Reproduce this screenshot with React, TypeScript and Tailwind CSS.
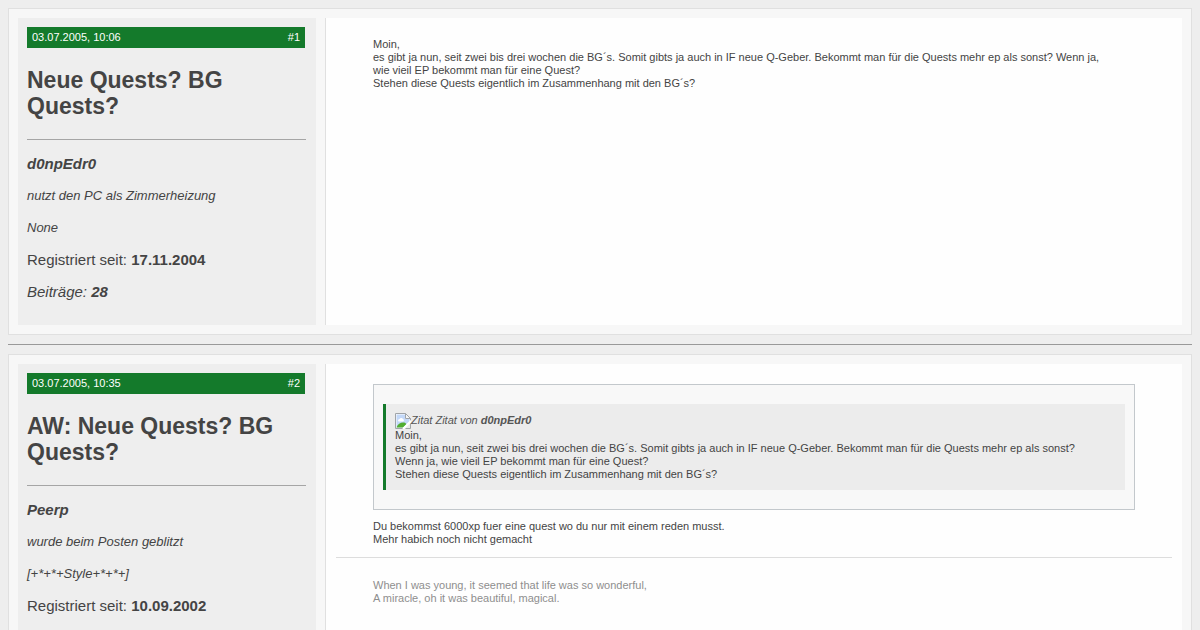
import React from "react";

interface Post {
  id: number;
  date: string;
  title: string;
  author: string;
  userTitle: string;
  nick: string;
  registered: string;
  postCount?: string;
  quote?: { author: string; lines: string[] };
  lines: string[];
  signature?: string[];
}

const QUESTION = [
  "Moin,",
  "es gibt ja nun, seit zwei bis drei wochen die BG´s. Somit gibts ja auch in IF neue Q-Geber. Bekommt man für die Quests mehr ep als sonst? Wenn ja, wie vieil EP bekommt man für eine Quest?",
  "Stehen diese Quests eigentlich im Zusammenhang mit den BG´s?",
];

const POSTS: Post[] = [
  {
    id: 1,
    date: "03.07.2005, 10:06",
    title: "Neue Quests? BG Quests?",
    author: "d0npEdr0",
    userTitle: "nutzt den PC als Zimmerheizung",
    nick: "None",
    registered: "17.11.2004",
    postCount: "28",
    lines: QUESTION,
  },
  {
    id: 2,
    date: "03.07.2005, 10:35",
    title: "AW: Neue Quests? BG Quests?",
    author: "Peerp",
    userTitle: "wurde beim Posten geblitzt",
    nick: "[+*+*+Style+*+*+]",
    registered: "10.09.2002",
    quote: { author: "d0npEdr0", lines: QUESTION },
    lines: ["Du bekommst 6000xp fuer eine quest wo du nur mit einem reden musst.", "Mehr habich noch nicht gemacht"],
    signature: ["When I was young, it seemed that life was so wonderful,", "A miracle, oh it was beautiful, magical."],
  },
];

const MissingImage: React.FC = () => (
  <svg className="h-4 w-4 shrink-0" viewBox="0 0 16 16" aria-hidden="true">
    <path d="M.5.5h10l5 5V8L8 15.500H.5z" fill="#fff" />
    <path d="M1.500 1.500H10V6h4.500v2.500L8 14.500H1.500z" fill="#c3d8f8" />
    <path d="M3 7.500a1.500 1.500 0 0 1 1.500-1.500 2 2 0 0 1 3.500 0A1.300 1.300 0 0 1 8 8.500H4a1 1 0 0 1-1-1z" fill="#fff" />
    <path d="M1.500 14.500c1-3.500 4-5 6.500-5 1.500 0 2.700.4 3.500 1.700L8 14.500z" fill="#52ae32" />
    <path d="M8 15.500H.5V.5h10l5 5v2" fill="none" stroke="#a0a4a8" />
    <path d="M10.500.5v5h5z" fill="#f6f6f6" stroke="#a0a4a8" />
    <path d="M16 8 8 16" stroke="#fff" strokeWidth="2" />
    <path d="M15.500 10.500v5H10.500" fill="none" stroke="#a0a4a8" />
  </svg>
);

const Lines: React.FC<{ lines: string[] }> = ({ lines }) => (
  <div className="pr-5">
    {lines.map((line) => (
      <p key={line}>{line}</p>
    ))}
  </div>
);

const Quote: React.FC<{ author: string; lines: string[] }> = ({ author, lines }) => (
  <div className="mb-[10px] border border-[#c3c8cc] bg-[#f8f8f8] px-[9px] py-[19px]">
    <blockquote className="border-l-[3px] border-[#147a2b] bg-[#ececec] px-[9px] pt-2 pb-[9px]">
      <div className="flex h-[17px] items-center italic text-[#555]">
        <MissingImage />
        <span>
          Zitat Zitat von <strong>{author}</strong>
        </span>
      </div>
      <Lines lines={lines} />
    </blockquote>
  </div>
);

const PostItem: React.FC<{ post: Post }> = ({ post }) => (
  <article id={`post${post.id}`} className="flex border border-[#e0e0e0] bg-[#f7f7f7] p-[9px]">
    <aside className="w-[298px] shrink-0 bg-[#eee] pt-[9px] pr-[10px] pb-[23px] pl-[9px]">
      <div className="mr-px flex h-[21px] items-center justify-between bg-[#147a2b] px-[5px] text-[11px] text-white">
        <span>{post.date}</span>
        <a href={`#post${post.id}`}>#{post.id}</a>
      </div>
      <h2 className="mt-[19px] text-[23px] leading-[26px] font-bold">{post.title}</h2>
      <hr className="mt-5 mb-[14px] border-[#a5a5a5]" />
      <div className="flex flex-col gap-3 text-[15px] leading-5">
        <p className="font-bold italic">{post.author}</p>
        <p className="text-[13px] leading-5 italic">{post.userTitle}</p>
        <p className="text-[13px] leading-5 italic">{post.nick}</p>
        <p>
          Registriert seit: <strong>{post.registered}</strong>
        </p>
        {post.postCount && (
          <p className="italic">
            Beiträge: <strong>{post.postCount}</strong>
          </p>
        )}
      </div>
    </aside>
    <div className="ml-[9px] min-w-0 grow border-l border-[#e0e0e0] bg-[#fefefe] px-[10px] pt-5 text-[11px] leading-[13px]">
      <div className="px-[37px]">
        {post.quote && <Quote author={post.quote.author} lines={post.quote.lines} />}
        <Lines lines={post.lines} />
      </div>
      {post.signature && (
        <div className="mt-[11px] border-t border-[#ddd] px-[37px] pt-[21px] text-[#8e8e8e]">
          <Lines lines={post.signature} />
        </div>
      )}
    </div>
  </article>
);

export default function App() {
  return (
    <main className="min-h-screen bg-[#eee] p-2 font-['Liberation_Sans',Arial,sans-serif] text-[#444]">
      {POSTS.map((post, i) => (
        <React.Fragment key={post.id}>
          {i > 0 && <hr className="my-[9px] border-[#999]" />}
          <PostItem post={post} />
        </React.Fragment>
      ))}
    </main>
  );
}
